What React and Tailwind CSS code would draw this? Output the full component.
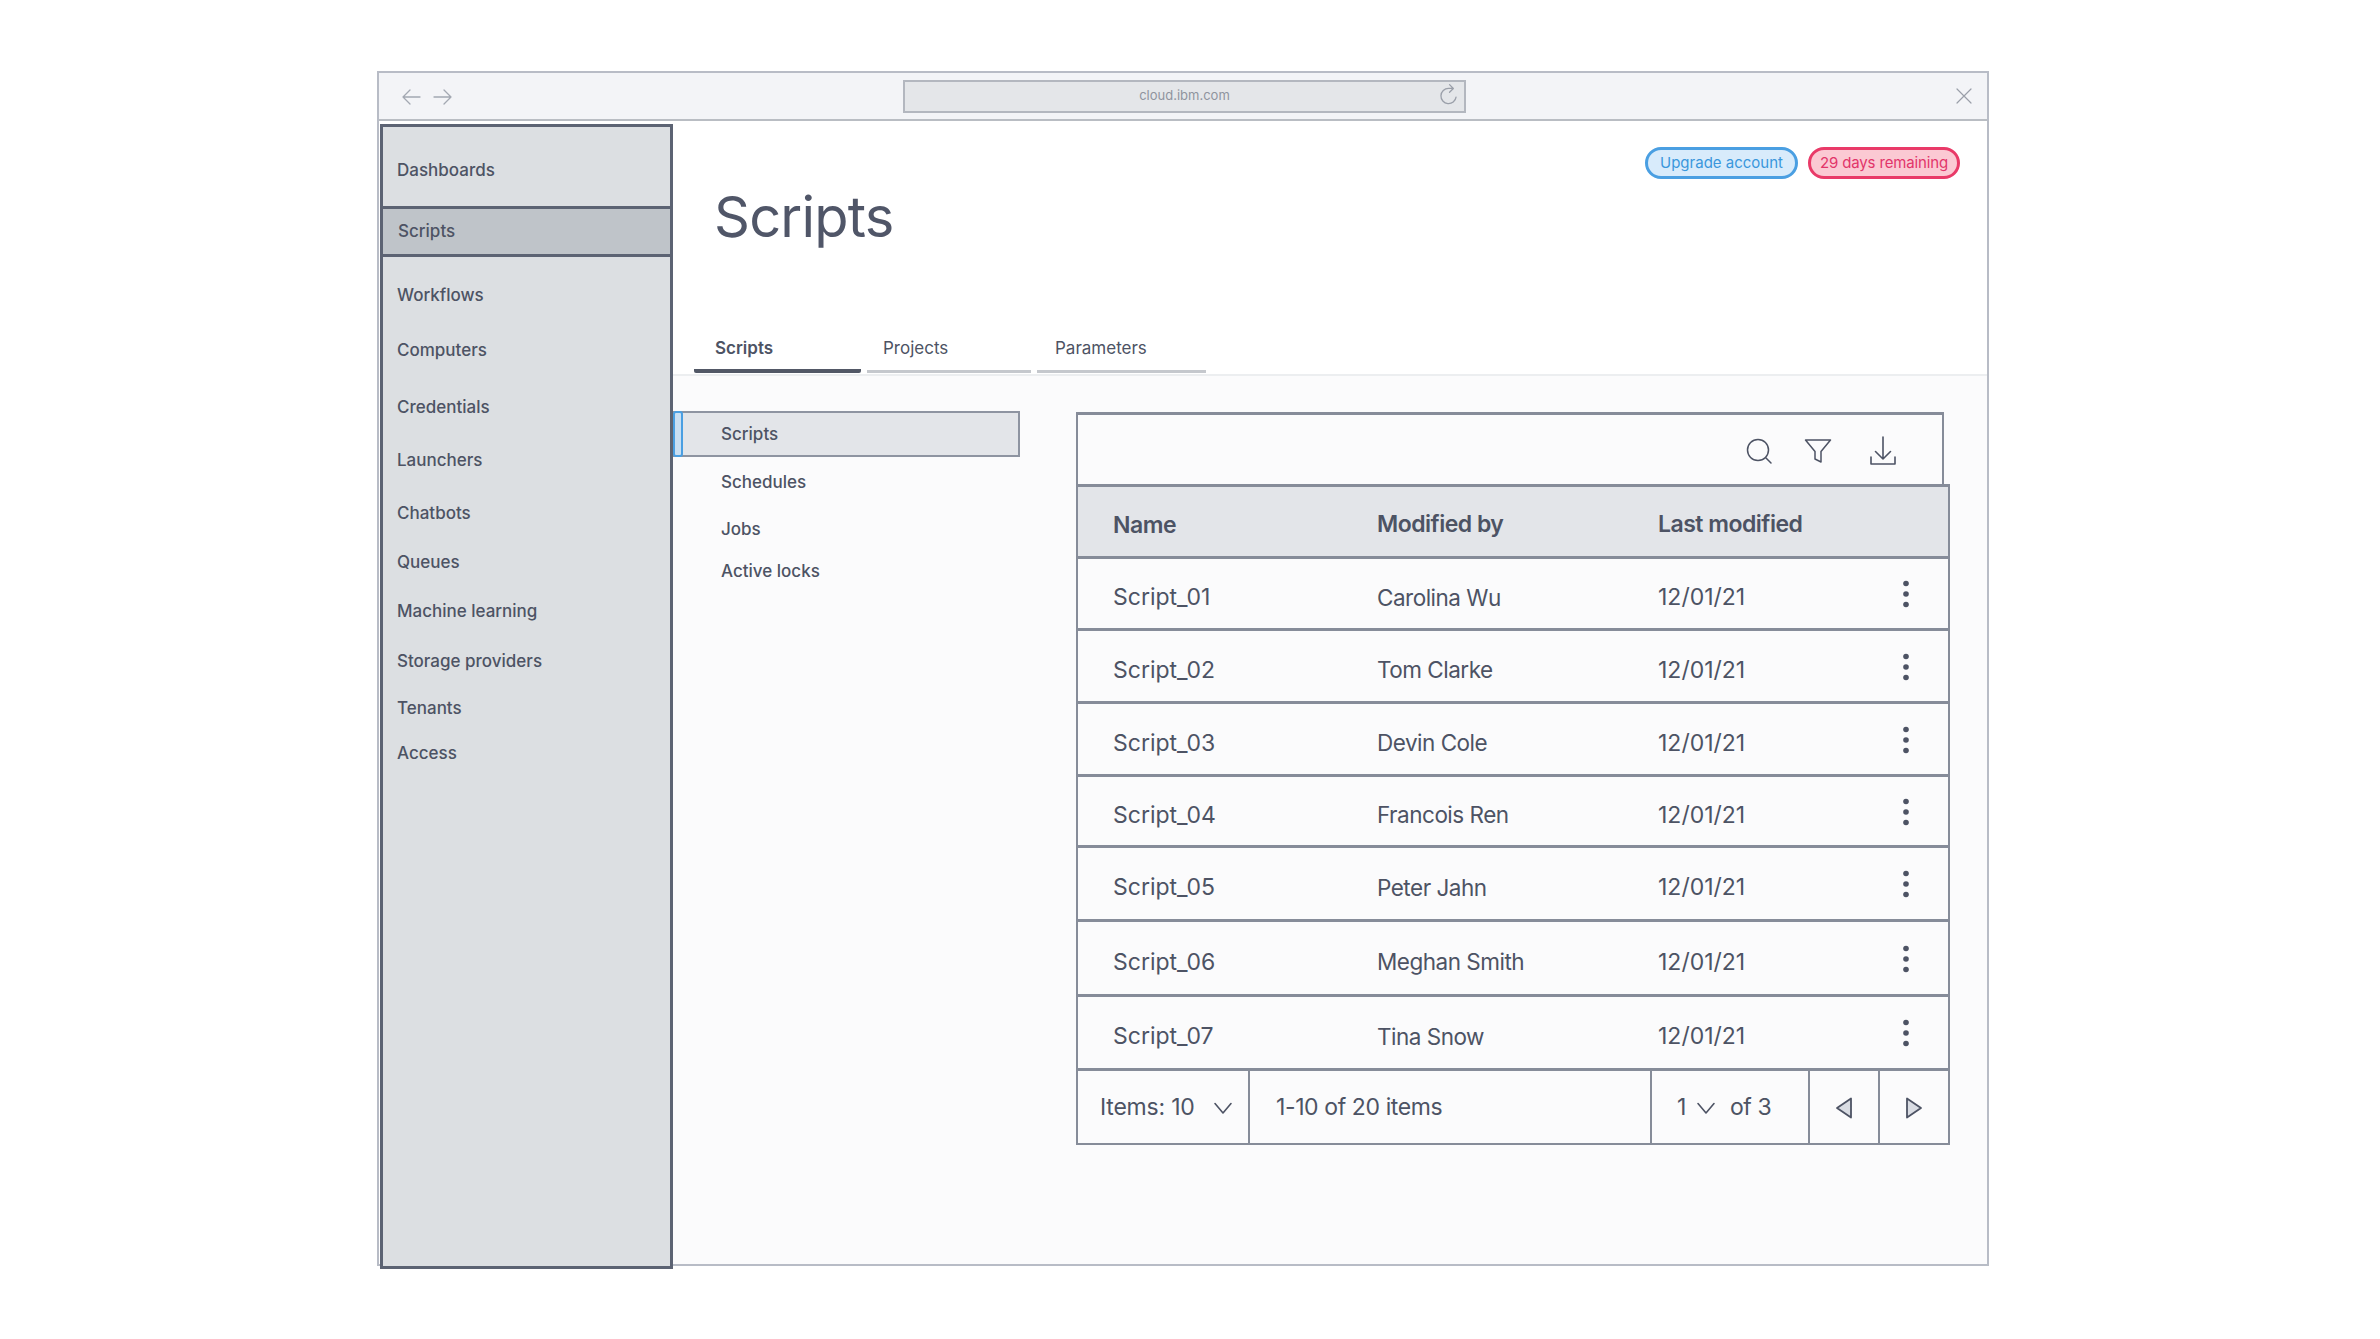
import React from "react";

const ink = "#4d5364";

const navItems = [
  ["Workflows", "mt-[27px]"],
  ["Computers", "mt-[31px]"],
  ["Credentials", "mt-[33px]"],
  ["Launchers", "mt-[29px]"],
  ["Chatbots", "mt-[29px]"],
  ["Queues", "mt-[25px]"],
  ["Machine learning", "mt-[25px]"],
  ["Storage providers", "mt-[26px]"],
  ["Tenants", "mt-[23px]"],
  ["Access", "mt-[21px]"],
];

const rows = [
  ["Script_01", "Carolina Wu", "h-[72px]"],
  ["Script_02", "Tom Clarke", "h-[73px]"],
  ["Script_03", "Devin Cole", "h-[73px]"],
  ["Script_04", "Francois Ren", "h-[71px]"],
  ["Script_05", "Peter Jahn", "h-[74px]"],
  ["Script_06", "Meghan Smith", "h-[75px]"],
  ["Script_07", "Tina Snow", "h-[74px]"],
];

function Line({ d, size = 24, vb = 24, w = 1.6, c = ink }) {
  return (
    <svg width={size} height={size} viewBox={`0 0 ${vb} ${vb}`} fill="none" stroke={c} strokeWidth={w} strokeLinecap="round" strokeLinejoin="round">
      <path d={d} />
    </svg>
  );
}

function Kebab() {
  return (
    <svg width="8" height="28" viewBox="0 0 8 28" fill="#4d5364">
      <circle cx="4" cy="3.5" r="2.8" />
      <circle cx="4" cy="14" r="2.8" />
      <circle cx="4" cy="24.5" r="2.8" />
    </svg>
  );
}

export default function App() {
  return (
    <div className="w-[2380px] h-[1339px] bg-white pt-[71px] pl-[377px] overflow-hidden font-['Inter',sans-serif] text-[#4d5364]">
      <div className="w-[1612px] h-[1195px] border-2 border-[#b8bcc6] flex flex-col">
        {/* browser bar */}
        <div className="h-[48px] shrink-0 bg-[#f3f4f7] border-b-[2px] border-[#b9bdc3] flex items-center">
          <div className="flex items-center gap-[8px] ml-[20px] w-[504px] pt-[2px]">
            <Line size={24} w={1.3} c="#a3a8b2" d="M11 5l-7 7 7 7M4 12h17" />
            <Line size={24} w={1.3} c="#a3a8b2" d="M13 5l7 7-7 7M20 12H3" />
          </div>
          <div className="relative w-[563px] h-[33px] bg-[#e4e6e9] border-2 border-[#b3b7bf] flex items-center justify-center">
            <span className="text-[13px] text-[#8f949e]">cloud.ibm.com</span>
            <div className="absolute right-[2px] top-[1px]">
              <Line size={26} w={1.2} c="#9a9fa9" d="M18.5 13a7 7 0 1 1-7-8h4M12.5 1.5 16 5l-3.5 3.5" />
            </div>
          </div>
          <div className="ml-auto mr-[11px]">
            <Line size={24} w={1.2} c="#9a9fa9" d="M5 5l14 14M19 5L5 19" />
          </div>
        </div>

        {/* body */}
        <div className="flex flex-1 min-h-0">
          {/* sidebar */}
          <aside className="relative z-10 mt-[3px] ml-[1px] w-[293px] h-[1145px] shrink-0 bg-[#dcdfe2] border-x-[3px] border-y-[3px] border-[#5c6373] flex flex-col text-[17px] font-medium">
            <div className="h-[79px] flex items-center pl-[14px] pt-[9px]">Dashboards</div>
            <div className="h-[51px] -mx-[3px] pl-[15px] bg-[#bfc4c9] border-[3px] border-[#5c6373] flex items-center">Scripts</div>
            {navItems.map(([label, gap]) => (
              <div key={label} className={`h-[24px] pl-[14px] flex items-center ${gap}`}>{label}</div>
            ))}
          </aside>

          {/* main */}
          <main className="flex-1 min-w-0 flex flex-col">
            {/* header */}
            <div className="h-[255px] shrink-0 bg-white border-b-2 border-[#eceef0] flex flex-col">
              <div className="flex justify-end gap-[10px] pt-[26px] pr-[27px]">
                <div className="w-[153px] h-[32px] rounded-full border-[3px] border-[#4a9fe2] bg-[#d8ebfb] text-[#3a97dc] text-[15px] flex items-center justify-center">Upgrade account</div>
                <div className="w-[152px] h-[32px] rounded-full border-[3px] border-[#e93a68] bg-[#fbc9d3] text-[#e2356a] text-[15px] tracking-[-0.15px] flex items-center justify-center">29 days remaining</div>
              </div>
              <h1 className="text-[56px] leading-[70px] font-normal tracking-[-0.8px] ml-[41px] mt-[3px] text-[#505668]">Scripts</h1>
              <div className="flex mt-[75px] ml-[21px] gap-[6px] text-[17px]">
                <div className="w-[167px] h-[46px] pt-[9px] pl-[21px] border-b-[4px] rounded-b-[2px] border-[#525866] font-semibold">Scripts</div>
                <div className="w-[164px] h-[46px] pt-[9px] pl-[16px] border-b-[3px] border-[#c5c8cd]">Projects</div>
                <div className="w-[169px] h-[46px] pt-[9px] pl-[18px] border-b-[3px] border-[#c5c8cd]">Parameters</div>
              </div>
            </div>

            {/* content */}
            <div className="flex-1 min-h-0 bg-[#fbfbfc] flex">
              {/* sub nav */}
              <div className="w-[403px] shrink-0 pt-[35px] text-[17px] font-medium">
                <div className="relative h-[46px] w-[347px] bg-[#e3e5e9] border-2 border-[#8e94a1] pl-[46px] pt-[1px] flex items-center">
                  Scripts
                  <div className="absolute left-[-2px] top-[-2px] w-[10px] h-[46px] rounded-[3px] bg-[#c9dff3] border-2 border-[#4a9fe2]"></div>
                </div>
                <div className="h-[24px] mt-[14px] pl-[48px] flex items-center">Schedules</div>
                <div className="h-[24px] mt-[23px] pl-[48px] flex items-center">Jobs</div>
                <div className="h-[24px] mt-[18px] pl-[48px] flex items-center">Active locks</div>
              </div>

              {/* table */}
              <div className="w-[874px] shrink-0 pt-[36px]">
                <div className="w-[868px] h-[72px] bg-[#fbfbfc] border-x-2 border-t-[3px] border-[#868c99] flex items-center justify-end gap-[27px] pr-[43px] pt-[2px]">
                  <Line size={32} w={1.5} vb={32} d="M15 4.5a10.5 10.5 0 1 0 0 21 10.5 10.5 0 0 0 0-21zM22.5 22.5 28 28" />
                  <Line size={32} w={1.5} vb={32} d="M3.5 5h25L19 16.5V27l-6-3V16.5z" />
                  <div className="ml-[6px] flex">
                    <Line size={32} w={1.6} vb={32} d="M16 2v22M8.5 16.5 16 24l7.5-7.5M4 22v7h24v-7" />
                  </div>
                </div>
                <div className="border-x-2 border-[#868c99]">
                  <div className="h-[75px] bg-[#e3e5e9] border-y-[3px] border-[#868c99] flex items-center text-[23px] font-semibold tracking-[-0.5px] pt-[5px]">
                    <div className="w-[299px] pl-[35px] pt-[2px]">Name</div>
                    <div className="w-[281px]">Modified by</div>
                    <div>Last modified</div>
                  </div>
                  {rows.map(([name, who, h]) => (
                    <div key={name} className={`${h} border-b-[3px] border-[#868c99] flex items-center text-[23px]`}>
                      <div className="w-[299px] pl-[35px] pt-[8px]">{name}</div>
                      <div className="w-[281px] pt-[8px] text-[22.5px] tracking-[-0.5px]">{who}</div>
                      <div className="w-[244px] pt-[8px]">12/01/21</div>
                      <div className="pt-[1px] flex"><Kebab /></div>
                    </div>
                  ))}
                  <div className="h-[74px] border-b-2 border-[#868c99] flex items-stretch text-[23px] tracking-[-0.4px]">
                    <div className="w-[172px] border-r-2 border-[#868c99] pl-[22px] flex items-center justify-between pr-[15px] tracking-[-0.2px]">
                      <span>Items: 10</span>
                      <Line size={20} w={1.6} d="M2 6.5l8 9.5 8-9.5" vb={20} />
                    </div>
                    <div className="w-[402px] border-r-2 border-[#868c99] pl-[26px] flex items-center">1-10 of 20 items</div>
                    <div className="w-[158px] border-r-2 border-[#868c99] pl-[25px] flex items-center gap-[10px]">
                      <span>1</span>
                      <Line size={20} w={1.6} d="M2 6.5l8 9.5 8-9.5" vb={20} />
                      <span className="ml-[4px]">of 3</span>
                    </div>
                    <div className="w-[70px] border-r-2 border-[#868c99] flex items-center justify-center pt-[2px]">
                      <svg width="18" height="22" viewBox="0 0 18 22" fill="#d9dce3" stroke="#4d5364" strokeWidth="1.8" strokeLinejoin="round"><path d="M16 1.5v19L2 11z" /></svg>
                    </div>
                    <div className="flex-1 flex items-center justify-center pt-[2px]">
                      <svg width="18" height="22" viewBox="0 0 18 22" fill="#d9dce3" stroke="#4d5364" strokeWidth="1.8" strokeLinejoin="round"><path d="M2 1.5v19L16 11z" /></svg>
                    </div>
                  </div>
                </div>
              </div>
            </div>
          </main>
        </div>
      </div>
    </div>
  );
}
